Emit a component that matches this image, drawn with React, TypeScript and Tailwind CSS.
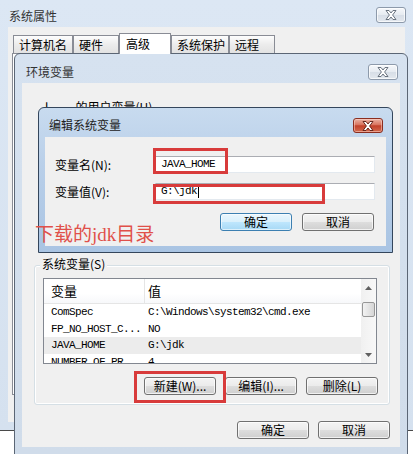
import React from "react";

function XGlyph({ stroke = "#4b5563" }: { stroke?: string }) {
  return (
    <svg width="12" height="10" viewBox="0 0 12 10">
      <polygon
        points="1,0.5 4,0.5 6,3 8,0.5 11,0.5 7.6,5 11,9.5 8,9.5 6,7 4,9.5 1,9.5 4.4,5"
        fill="#ffffff"
        stroke={stroke}
        strokeWidth="0.9"
        strokeLinejoin="round"
      />
    </svg>
  );
}

function CloseGray() {
  return (
    <div className="w-[30px] h-[16px] rounded-[3px] border border-[#8d9aab] bg-[linear-gradient(to_bottom,#f6f8fb_0%,#e6ebf1_50%,#d7dee7_51%,#e3e8ee_100%)] shadow-[inset_0_0_0_1px_rgba(255,255,255,0.7)] flex items-center justify-center">
      <XGlyph stroke="#5b6573" />
    </div>
  );
}

function CloseRed() {
  return (
    <div className="w-[30px] h-[15px] rounded-[3px] border border-[#8b2e20] bg-[linear-gradient(to_bottom,#eab2a4_0%,#d9745e_45%,#c2412a_52%,#d26a4f_100%)] shadow-[inset_0_0_0_1px_rgba(255,220,210,0.5)] flex items-center justify-center">
      <XGlyph stroke="#5a1a10" />
    </div>
  );
}

function Btn({ children, focused = false }: { children: React.ReactNode; focused?: boolean }) {
  return (
    <div
      className={
        focused
          ? "w-[72px] h-[18px] rounded-[3px] border border-[#3c7fb1] bg-[linear-gradient(to_bottom,#eaf6fd_0%,#d9f0fc_50%,#bee6fd_51%,#a7d9f5_100%)] shadow-[inset_0_0_0_1px_rgba(255,255,255,0.6)] flex items-center justify-center text-[12px] leading-none text-black shrink-0"
          : "w-[72px] h-[18px] rounded-[3px] border border-[#707070] bg-[linear-gradient(to_bottom,#f4f4f4_0%,#ebebeb_50%,#dddddd_51%,#cfcfcf_100%)] shadow-[inset_0_0_0_1px_rgba(255,255,255,0.7)] flex items-center justify-center text-[12px] leading-none text-black shrink-0"
      }
    >
      {children}
    </div>
  );
}

function Tab({ label, w, selected = false }: { label: string; w: string; selected?: boolean }) {
  return (
    <div
      className={
        selected
          ? `${w} h-[21px] -mb-[1px] relative z-10 bg-white border border-b-0 border-[#898c95] pl-[6px] pt-[2px] leading-[16px] text-[12px]`
          : `${w} h-[18px] bg-[linear-gradient(to_bottom,#fdfdfd_0%,#ececec_50%,#e2e2e2_100%)] border border-b-0 border-[#898c95] pl-[5px] pt-[1px] leading-[16px] text-[12px]`
      }
    >
      {label}
    </div>
  );
}

function Triangle({ up }: { up: boolean }) {
  return (
    <svg width="7" height="4" viewBox="0 0 7 4">
      <polygon points={up ? "0,4 7,4 3.5,0" : "0,0 7,0 3.5,4"} fill="#606060" />
    </svg>
  );
}

const rows: { k: string; v: string; sel?: boolean }[] = [
  { k: "ComSpec", v: "C:\\Windows\\system32\\cmd.exe" },
  { k: "FP_NO_HOST_C...", v: "NO" },
  { k: "JAVA_HOME", v: "G:\\jdk", sel: true },
  { k: "NUMBER_OF_PR...", v: "4" },
];

export default function App() {
  return (
    <div className="relative w-[413px] h-[454px] overflow-hidden bg-white text-black text-[12px] font-['Noto_Sans_CJK_SC',sans-serif]">
      {/* Outer window: 系统属性 */}
      <div className="absolute left-0 top-0 w-[413px] h-[431px] bg-[linear-gradient(to_bottom,#dce7f4_0%,#d5e1ef_100%)] border-b border-[#4a4a4a] flex flex-col">
        <div className="h-[27px] shrink-0 flex items-start justify-between pl-[9px] pr-[7px] pt-[7px]">
          <span className="leading-[16px] pt-[1px] text-[#333]">系统属性</span>
          <CloseGray />
        </div>
        <div className="mx-[8px] mb-[8px] flex-1 bg-[#f0f0f0] flex flex-col pt-[6px] pb-[27px]">
          <div className="h-[20px] flex items-end ml-[5px]">
            <Tab label="计算机名" w="w-[60px]" />
            <Tab label="硬件" w="w-[46px]" />
            <Tab label="高级" w="w-[52px]" selected />
            <Tab label="系统保护" w="w-[58px]" />
            <Tab label="远程" w="w-[46px]" />
          </div>
          <div className="flex-1 ml-[4px] mr-[4px] border border-[#898c95] bg-white" />
        </div>
      </div>

      {/* 环境变量 window */}
      <div className="absolute left-[14px] top-[53px] w-[394px] h-[402px] rounded-t-[6px] border border-[#5b6675] bg-[linear-gradient(to_bottom,#d6e2f0_0%,#d0dcea_100%)] flex flex-col">
        <div className="h-[29px] shrink-0 flex items-start justify-between pl-[11px] pr-[9px]">
          <span className="pt-[10px] leading-[16px] text-[#333]">环境变量</span>
          <div className="mt-[10px]">
            <CloseGray />
          </div>
        </div>
        <div className="mx-[7px] mb-[7px] flex-1 bg-[#f0f0f0] flex flex-col">
          <div className="h-[182px] shrink-0 pt-[16px] pl-[23px] flex items-start leading-[16px]">
            <span>l</span>
            <span className="ml-[27px]">的用户变量(U)</span>
          </div>

          {/* 系统变量 group */}
          <div className="relative ml-[12px] w-[356px] h-[140px] shrink-0 border border-[#d5dfe5] rounded-[3px] shadow-[inset_0_0_0_1px_#ffffff] pl-[8px] pt-[12px] flex flex-col">
            <span className="absolute left-[5px] -top-[10px] px-[2px] bg-[#f0f0f0] leading-[16px]">系统变量(S)</span>

            <div className="w-[334px] h-[86px] border border-[#828790] bg-white flex overflow-hidden">
              <div className="flex-1 flex flex-col overflow-hidden">
                <div className="h-[25px] shrink-0 flex border-b border-[#e5e5e5] bg-[linear-gradient(to_bottom,#ffffff_0%,#ffffff_60%,#f7f8fa_100%)]">
                  <div className="w-[101px] border-r border-[#e5e5e5] pl-[7px] flex items-center text-[13px]">变量</div>
                  <div className="pl-[3px] flex items-center text-[13px]">值</div>
                </div>
                {rows.map((r) => (
                  <div
                    key={r.k}
                    className={
                      r.sel
                        ? "h-[16.5px] shrink-0 flex items-center bg-[#ececec] font-['Liberation_Mono',monospace] text-[11px] tracking-[-0.6px]"
                        : "h-[16.5px] shrink-0 flex items-center font-['Liberation_Mono',monospace] text-[11px] tracking-[-0.6px]"
                    }
                  >
                    <div className="w-[101px] pl-[7px] whitespace-nowrap">{r.k}</div>
                    <div className="pl-[3px] whitespace-nowrap">{r.v}</div>
                  </div>
                ))}
              </div>
              <div className="w-[15px] shrink-0 bg-[linear-gradient(to_right,#f0f0f0_0%,#f8f8f8_100%)] flex flex-col">
                <div className="h-[17px] shrink-0 flex items-center justify-center">
                  <Triangle up />
                </div>
                <div className="flex-1 flex flex-col px-[1px]">
                  <div className="mt-[6px] h-[15px] rounded-[2px] border border-[#979797] bg-[linear-gradient(to_right,#f2f2f2_0%,#e4e4e4_50%,#d6d6d6_100%)]" />
                </div>
                <div className="h-[17px] shrink-0 flex items-center justify-center">
                  <Triangle up={false} />
                </div>
              </div>
            </div>

            <div className="mt-[13px] flex justify-end gap-[9px] pr-[11px]">
              <Btn>新建(W)...</Btn>
              <Btn>编辑(I)...</Btn>
              <Btn>删除(L)</Btn>
            </div>
          </div>

          <div className="mt-[16px] flex justify-end gap-[9px] pr-[10px]">
            <Btn>确定</Btn>
            <Btn>取消</Btn>
          </div>
        </div>
      </div>

      {/* 编辑系统变量 dialog */}
      <div className="absolute left-[38px] top-[107px] w-[355px] h-[146px] rounded-t-[6px] border border-[#34465c] bg-[linear-gradient(to_bottom,#c8dbef_0%,#b9cfe9_40%,#a9c4e3_100%)] flex flex-col">
        <div className="h-[29px] shrink-0 flex items-start justify-between pl-[10px] pr-[9px]">
          <span className="pt-[9px] leading-[16px] text-[#222]">编辑系统变量</span>
          <div className="mt-[10px]">
            <CloseRed />
          </div>
        </div>
        <div className="mx-[6px] mb-[6px] flex-1 bg-[#f0f0f0] flex flex-col pt-[19px] pl-[10px] pr-[11px]">
          <div className="h-[17px] flex items-center">
            <span className="w-[100px] shrink-0">变量名(N):</span>
            <div className="w-[220px] h-[17px] bg-white border border-[#e3e9ef] border-t-[#abadb3] flex items-center pl-[5px] font-['Liberation_Mono',monospace] text-[11px] tracking-[-0.6px]">
              JAVA_HOME
            </div>
          </div>
          <div className="mt-[10px] h-[17px] flex items-center">
            <span className="w-[100px] shrink-0">变量值(V):</span>
            <div className="w-[220px] h-[17px] bg-white border border-[#e3e9ef] border-t-[#abadb3] flex items-center pl-[5px] font-['Liberation_Mono',monospace] text-[11px] tracking-[-0.6px]">
              G:\jdk
              <span className="ml-[1px] w-[1px] h-[12px] bg-black" />
            </div>
          </div>
          <div className="mt-[13px] flex justify-end gap-[10px] pr-[1px]">
            <Btn focused>确定</Btn>
            <Btn>取消</Btn>
          </div>
        </div>
      </div>

      {/* annotations */}
      <div className="absolute left-[153px] top-[148px] w-[75px] h-[26px] border-[3px] border-[#d83b3b]" />
      <div className="absolute left-[153px] top-[184px] w-[172px] h-[20px] border-[3px] border-[#d83b3b]" />
      <div className="absolute left-[134px] top-[371px] w-[92px] h-[32px] border-[3px] border-[#d83b3b]" />
      <div className="absolute left-[35px] top-[223px] leading-[20px] text-[19px] text-[#e0504a] whitespace-nowrap">
        下载的<span className="font-['Liberation_Serif',serif]">jdk</span>目录
      </div>
    </div>
  );
}
